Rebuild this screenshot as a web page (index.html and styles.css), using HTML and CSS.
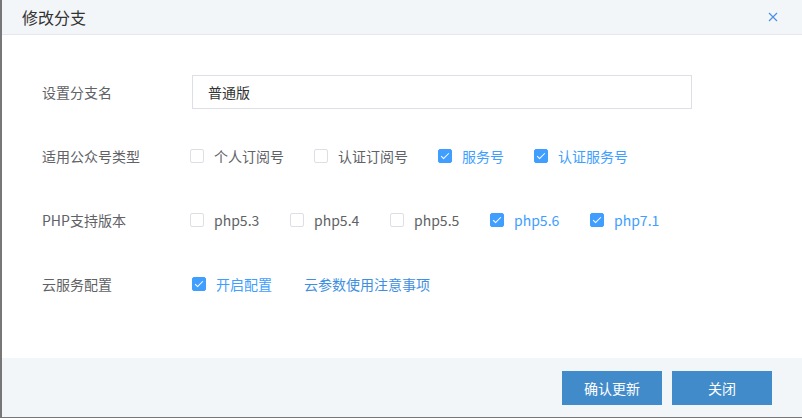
FILE: index.html
```html
<!DOCTYPE html>
<html>
<head>
  <meta charset="utf-8">
  <title>修改分支</title>
  <link rel="stylesheet" href="styles.css">
</head>
<body>
  <div class="dialog">
    <div class="dialog-header">
      <span class="dialog-title">修改分支</span>
      <span class="dialog-close">
        <svg viewBox="0 0 10 10" width="10" height="10">
          <path d="M1,1 L9,9 M9,1 L1,9" stroke="#4a90e2" stroke-width="1.2" fill="none"/>
        </svg>
      </span>
    </div>

    <div class="dialog-body">
      <div class="form-row">
        <label class="form-label">设置分支名</label>
        <input class="text-input" type="text" value="普通版">
      </div>

      <div class="form-row">
        <label class="form-label">适用公众号类型</label>
        <div class="check-group">
          <span class="check"><span class="box"></span>个人订阅号</span>
          <span class="check"><span class="box"></span>认证订阅号</span>
          <span class="check checked"><span class="box"></span>服务号</span>
          <span class="check checked"><span class="box"></span>认证服务号</span>
        </div>
      </div>

      <div class="form-row">
        <label class="form-label">PHP支持版本</label>
        <div class="check-group php">
          <span class="check"><span class="box"></span>php5.3</span>
          <span class="check"><span class="box"></span>php5.4</span>
          <span class="check"><span class="box"></span>php5.5</span>
          <span class="check checked"><span class="box"></span>php5.6</span>
          <span class="check checked"><span class="box"></span>php7.1</span>
        </div>
      </div>

      <div class="form-row">
        <label class="form-label">云服务配置</label>
        <div class="check-group cloud">
          <span class="check checked"><span class="box"></span>开启配置</span>
          <a class="link" href="#">云参数使用注意事项</a>
        </div>
      </div>
    </div>

    <div class="dialog-footer">
      <button class="btn">确认更新</button>
      <button class="btn">关闭</button>
    </div>
  </div>
</body>
</html>
```

FILE: styles.css
```css
:root {
  --primary: #409eff;
  --link: #3d8fe0;
  --btn: #428bca;
  --text: #606266;
  --title: #333;
  --border: #dcdfe6;
  --header-bg: #f3f6f9;
}

html, body {
  margin: 0;
  padding: 0;
}

body {
  width: 802px;
  height: 418px;
  background: #777;
  font-family: "Noto Sans CJK SC", "Noto Sans", sans-serif;
  font-size: 14px;
  color: var(--text);
  overflow: hidden;
}

.dialog {
  margin-left: 2px;
  height: 417px;
  background: #fff;
  display: flex;
  flex-direction: column;
}

.dialog-header {
  height: 34px;
  background: var(--header-bg);
  border-bottom: 1px solid #e4e8ee;
  display: flex;
  align-items: center;
  justify-content: space-between;
  padding: 0 24px 0 20px;
}

.dialog-title {
  font-size: 16px;
  color: var(--title);
}

.dialog-close {
  display: flex;
  align-items: center;
}

.dialog-body {
  flex: 1;
  padding: 40px 0 0 40px;
}

.form-row {
  display: flex;
  align-items: center;
  height: 34px;
  margin-bottom: 30px;
}

.form-label {
  width: 148px;
  color: var(--text);
}

.text-input {
  width: 500px;
  height: 34px;
  margin-left: 2px;
  box-sizing: border-box;
  border: 1px solid var(--border);
  border-radius: 0;
  padding: 0 15px;
  font-family: inherit;
  font-size: 14px;
  color: var(--title);
  outline: none;
}

.check-group {
  display: flex;
  align-items: center;
}

.check {
  display: flex;
  align-items: center;
  gap: 10px;
  margin-right: 30px;
}

.php .check {
  width: 100px;
  margin-right: 0;
}

.cloud {
  padding-left: 2px;
}

.cloud .check {
  margin-right: 32px;
}

.box {
  width: 14px;
  height: 14px;
  box-sizing: border-box;
  border: 1px solid var(--border);
  border-radius: 2px;
  background: #fff;
  position: relative;
}

.check.checked {
  color: var(--primary);
}

.check.checked .box {
  background: var(--primary);
  border-color: var(--primary);
}

.check.checked .box::after {
  content: "";
  position: absolute;
  left: 4px;
  top: 1px;
  width: 3px;
  height: 7px;
  border: solid #fff;
  border-width: 0 1px 1px 0;
  transform: rotate(45deg);
}

.link {
  color: var(--link);
  text-decoration: none;
}

.dialog-footer {
  height: 59px;
  background: var(--header-bg);
  display: flex;
  justify-content: flex-end;
  align-items: flex-start;
  gap: 10px;
  padding: 13px 30px 0 0;
  box-sizing: border-box;
}

.btn {
  width: 100px;
  height: 34px;
  border: none;
  border-radius: 0;
  background: var(--btn);
  color: #fff;
  font-family: inherit;
  font-size: 14px;
  cursor: pointer;
}
```
